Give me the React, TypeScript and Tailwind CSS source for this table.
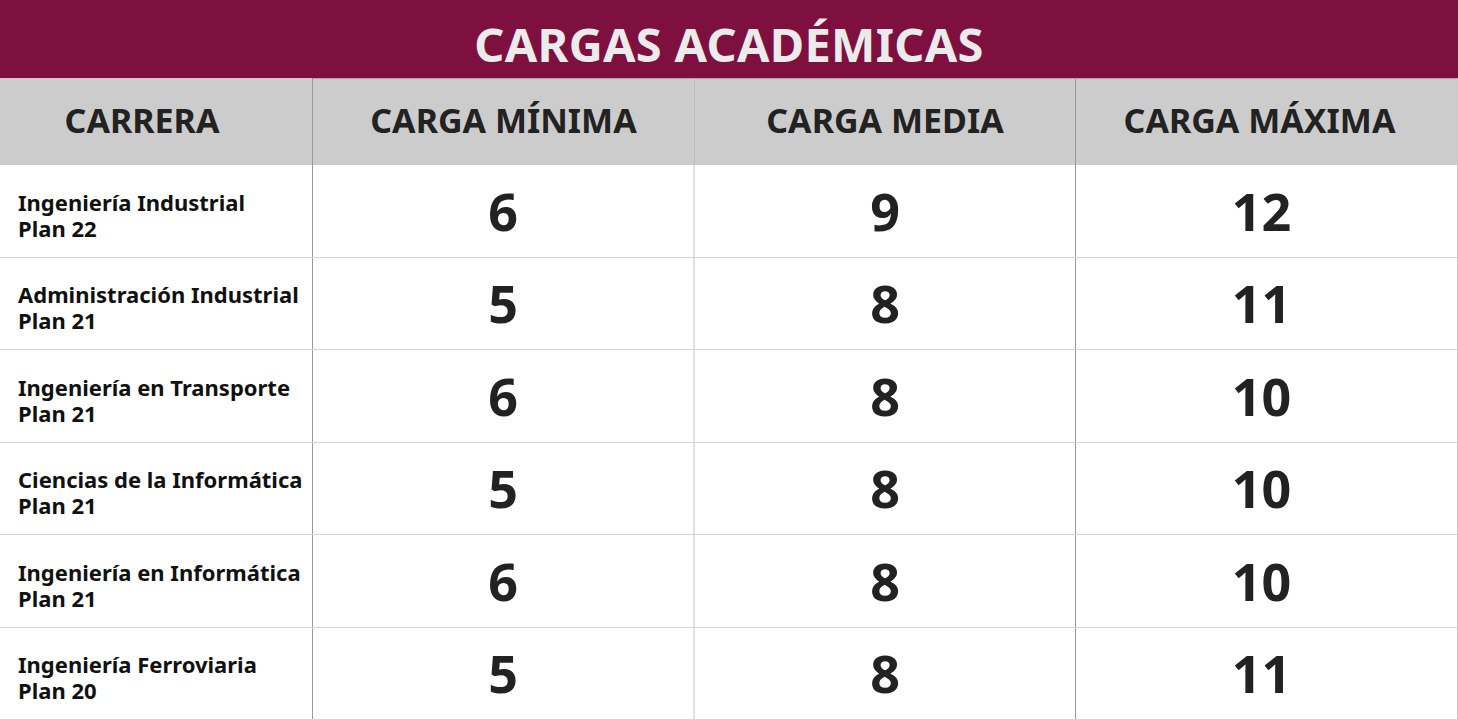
const rows = [
  { name: "Ingeniería Industrial", plan: "Plan 22", min: 6, med: 9, max: 12 },
  { name: "Administración Industrial", plan: "Plan 21", min: 5, med: 8, max: 11 },
  { name: "Ingeniería en Transporte", plan: "Plan 21", min: 6, med: 8, max: 10 },
  { name: "Ciencias de la Informática", plan: "Plan 21", min: 5, med: 8, max: 10 },
  { name: "Ingeniería en Informática", plan: "Plan 21", min: 6, med: 8, max: 10 },
  { name: "Ingeniería Ferroviaria", plan: "Plan 20", min: 5, med: 8, max: 11 },
];

export default function App() {
  return (
    <div className="h-screen w-[1458px] flex flex-col bg-white font-['Noto_Sans',sans-serif] overflow-hidden">
      {/* Title */}
      <div className="h-[78px] shrink-0 bg-[#7d103f] flex items-center justify-center">
        <h1 className="text-[47px] font-bold text-[#ebebeb] tracking-[0.3px] leading-none pt-[10px]">
          CARGAS ACADÉMICAS
        </h1>
      </div>

      {/* Header */}
      <div className="h-[87px] shrink-0 grid grid-cols-[313px_382px_381px_382px] bg-[#cccccc] text-[#222222] text-[34px] font-bold leading-none">
        <div className="flex items-center justify-center pr-[28px] pb-[4px] border-r border-[#9a9a9a]">CARRERA</div>
        <div className="flex items-center justify-center pb-[4px] border-t border-r border-[#a8a8a8] border-r-[#bdbdbd]">CARGA MÍNIMA</div>
        <div className="flex items-center justify-center pb-[4px] border-t border-r border-[#a8a8a8] border-r-[#9a9a9a]">CARGA MEDIA</div>
        <div className="flex items-center justify-center pr-[14px] pb-[4px] border-t border-r border-[#a8a8a8] border-r-[#c4c4c4]">
          CARGA MÁXIMA
        </div>
      </div>

      {/* Rows */}
      {rows.map((r) => (
        <div
          key={r.name}
          className="flex-1 grid grid-cols-[313px_382px_381px_382px] border-b border-[#d6d6d6]"
        >
          <div className="flex flex-col justify-center pl-[18px] pt-[8px] border-r border-[#9a9a9a] text-[22px] leading-[26px] font-bold text-[#111111]">
            <span>{r.name}</span>
            <span>{r.plan}</span>
          </div>
          <div className="flex items-center justify-center border-r-2 border-[#e2e2e2] text-[52px] font-bold text-[#222222] leading-none">
            {r.min}
          </div>
          <div className="flex items-center justify-center border-r border-[#9a9a9a] text-[52px] font-bold text-[#222222] leading-none">
            {r.med}
          </div>
          <div className="flex items-center justify-center pr-[10px] border-r border-[#c4c4c4] text-[52px] font-bold text-[#222222] leading-none">
            {r.max}
          </div>
        </div>
      ))}
    </div>
  );
}
